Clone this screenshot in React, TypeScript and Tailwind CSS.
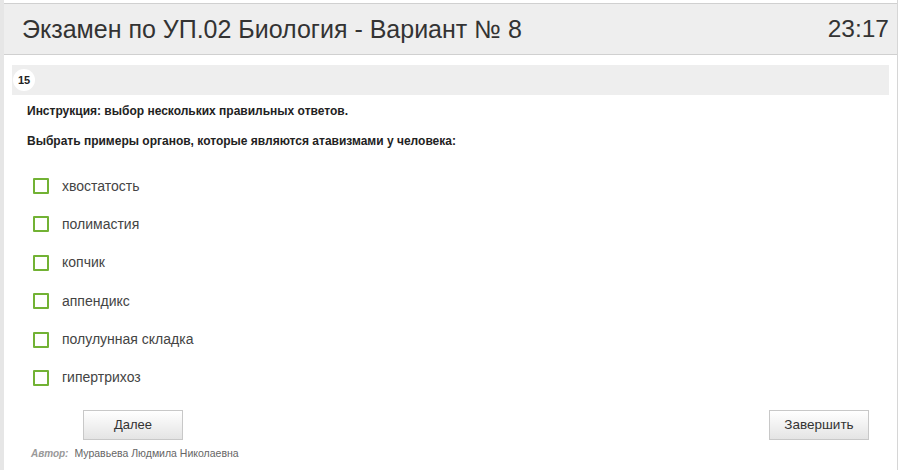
const options = [
  'хвостатость',
  'полимастия',
  'копчик',
  'аппендикс',
  'полулунная складка',
  'гипертрихоз',
];

export default function App() {
  return (
    <div className="h-[470px] w-[901px] bg-white font-['Liberation_Sans',Arial,sans-serif] text-[#333]">
      <div className="flex h-full w-[898px] flex-col border-l-[4px] border-r border-l-[#e6e6e6] border-r-[#d6d6d6] pt-[3px]">
        {/* Header */}
        <div className="flex h-[52px] items-center justify-between border-y border-[#d0d0d0] bg-[#eeeeee] pl-[18px] pr-[8px]">
          <h1 className="text-[25px] leading-none text-[#333]">Экзамен по УП.02 Биология - Вариант № 8</h1>
          <span className="text-[24.5px] leading-none text-[#333]">23:17</span>
        </div>

        <div className="px-[8px] pt-[10px]">
          {/* Question number bar */}
          <div className="flex h-[30px] items-center bg-[#eeeeee] pl-[1px]">
            <span className="flex h-[22px] w-[22px] items-center justify-center rounded-full bg-white text-[11px] font-bold text-[#222]">
              15
            </span>
          </div>

          <div className="pl-[15px] pt-[9px]">
            <p className="text-[12px] font-bold leading-[14px] text-[#222]">Инструкция: выбор нескольких правильных ответов.</p>
            <p className="mt-[16px] text-[12px] font-bold leading-[14px] text-[#222]">
              Выбрать примеры органов, которые являются атавизмами у человека:
            </p>

            <ul className="mt-[30px] flex flex-col gap-[22.4px] pl-[6px]">
              {options.map((o) => (
                <li key={o} className="flex h-[16px] items-center gap-[13px]">
                  <span className="h-[16px] w-[16px] rounded-[1px] border-2 border-[#72b234] bg-white" />
                  <span className="text-[14px] text-[#444]">{o}</span>
                </li>
              ))}
            </ul>
          </div>

          {/* Buttons */}
          <div className="mt-[24px] flex items-center justify-between pl-[71px] pr-[20px]">
            <button className="h-[30px] w-[100px] border border-[#c8c8c8] bg-gradient-to-b from-white to-[#e4e4e4] text-[13px] text-[#333]">
              Далее
            </button>
            <button className="h-[30px] w-[100px] border border-[#c8c8c8] bg-gradient-to-b from-white to-[#e4e4e4] text-[13.5px] text-[#333]">
              Завершить
            </button>
          </div>

          <div className="mt-[6px] flex items-baseline gap-[6px] pl-[19px]">
            <span className="text-[10px] font-bold italic text-[#999]">Автор:</span>
            <span className="text-[10.5px] text-[#666]">Муравьева Людмила Николаевна</span>
          </div>
        </div>
      </div>
    </div>
  );
}
